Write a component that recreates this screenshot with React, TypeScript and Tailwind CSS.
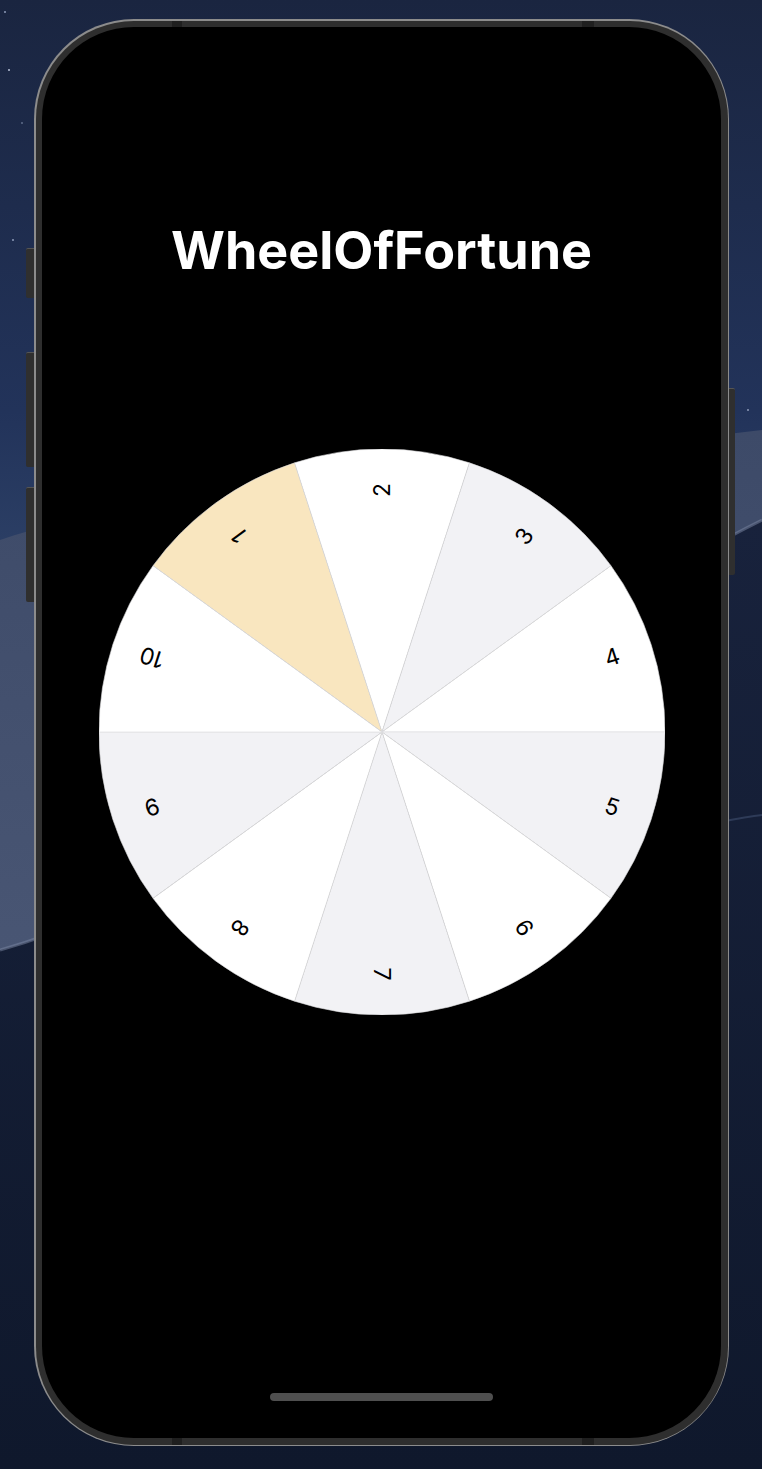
const segments = [1, 2, 3, 4, 5, 6, 7, 8, 9, 10];

const CX = 283;
const CY = 283;
const R = 283;
const LABEL_R = 242;

const rad = (deg: number) => (deg * Math.PI) / 180;

// point on the wheel, angle measured counter-clockwise from 3 o'clock
const pt = (deg: number, r: number) => [CX + r * Math.cos(rad(deg)), CY - r * Math.sin(rad(deg))];

const segmentFill = (n: number) => {
  if (n === 1) return "#f9e6bf";
  return n % 2 === 0 ? "#ffffff" : "#f2f2f5";
};

const Wheel = () => (
  <svg width={566} height={566} viewBox="0 0 566 566" className="block">
    {segments.map((n) => {
      const mid = 90 - (n - 2) * 36;
      const [x1, y1] = pt(mid + 18, R);
      const [x2, y2] = pt(mid - 18, R);
      return (
        <path
          key={n}
          d={`M${CX} ${CY} L${x1} ${y1} A${R} ${R} 0 0 1 ${x2} ${y2} Z`}
          fill={segmentFill(n)}
          stroke="#dcdcde"
          strokeWidth={0.6}
        />
      );
    })}
    {segments.map((n) => {
      const mid = 90 - (n - 2) * 36;
      const [x, y] = pt(mid, LABEL_R);
      return (
        <text
          key={n}
          x={0}
          y={0}
          transform={`translate(${x} ${y}) rotate(${-mid})`}
          textAnchor="middle"
          dominantBaseline="central"
          fontSize={23}
          fill="#000"
          style={{ fontFamily: "Inter, 'Liberation Sans', sans-serif" }}
        >
          {n}
        </text>
      );
    })}
  </svg>
);

const Wallpaper = () => (
  <svg className="absolute inset-0" width={762} height={1469} viewBox="0 0 762 1469">
    <defs>
      <linearGradient id="sky" x1="0" y1="0" x2="0" y2="1">
        <stop offset="0" stopColor="#1a2540" />
        <stop offset="0.28" stopColor="#22335a" />
        <stop offset="0.4" stopColor="#2e4268" />
        <stop offset="1" stopColor="#2a3b5e" />
      </linearGradient>
      <linearGradient id="dune" x1="0" y1="0" x2="0" y2="1">
        <stop offset="0" stopColor="#3d4a68" />
        <stop offset="0.7" stopColor="#4d5a78" />
        <stop offset="1" stopColor="#6b7896" />
      </linearGradient>
      <linearGradient id="front" x1="0" y1="0" x2="0" y2="1">
        <stop offset="0" stopColor="#18223c" />
        <stop offset="1" stopColor="#0f182c" />
      </linearGradient>
    </defs>
    <rect width={762} height={1469} fill="url(#sky)" />
    <path d="M0 540 C 180 480 420 470 762 430 L762 1469 L0 1469 Z" fill="url(#dune)" />
    <path d="M0 950 C 250 880 520 640 762 520 L762 1469 L0 1469 Z" fill="url(#front)" />
    <path d="M0 950 C 250 880 520 640 762 520" fill="none" stroke="#7b88a4" strokeWidth={3} opacity={0.5} />
    <path d="M720 822 C 740 818 752 816 762 815" fill="none" stroke="#2e3b58" strokeWidth={2} />
    <circle cx={5} cy={12} r={1} fill="#8e9bb8" />
    <circle cx={9} cy={70} r={1} fill="#b8c2d8" />
    <circle cx={13} cy={240} r={1} fill="#8e9bb8" />
    <circle cx={748} cy={410} r={1} fill="#8e9bb8" />
    <circle cx={22} cy={123} r={0.8} fill="#8e9bb8" />
  </svg>
);

export default function App() {
  return (
    <div className="relative w-[762px] h-[1469px] overflow-hidden bg-[#162038]">
      <Wallpaper />
      <div className="relative pt-[19px] pl-[34px]">
        <div className="relative w-[695px] h-[1427px]">
          {/* side buttons */}
          <div className="absolute left-[-8px] top-[229px] w-[8px] h-[50px] rounded-l-[2px] bg-[#2f2f2f] border-t border-[#555]" />
          <div className="absolute left-[-8px] top-[333px] w-[8px] h-[115px] rounded-l-[2px] bg-[#2f2f2f] border-t border-[#555]" />
          <div className="absolute left-[-8px] top-[468px] w-[8px] h-[115px] rounded-l-[2px] bg-[#2f2f2f] border-t border-[#555]" />
          <div className="absolute right-[-6px] top-[369px] w-[6px] h-[187px] rounded-r-[2px] bg-[#2f2f2f] border-t border-[#555]" />

          {/* frame */}
          <div className="w-full h-full rounded-[100px] bg-[#8c8c8c] p-[1.5px]">
            <div className="relative w-full h-full rounded-[98px] bg-[#2e2e2e] p-[6.5px]">
              <div className="absolute left-[136px] top-0 w-[10px] h-[8px] bg-[#1f1f1f]" />
              <div className="absolute left-[546px] top-0 w-[12px] h-[8px] bg-[#1f1f1f]" />
              <div className="absolute left-[136px] bottom-0 w-[10px] h-[8px] bg-[#1f1f1f]" />
              <div className="absolute left-[546px] bottom-0 w-[12px] h-[8px] bg-[#1f1f1f]" />

              {/* screen */}
              <div className="relative w-full h-full rounded-[92px] bg-black flex flex-col items-center overflow-hidden">
                <h1 className="mt-[198px] text-[52px] leading-[52px] font-bold text-white font-['Inter','Liberation_Sans',sans-serif]">
                  WheelOfFortune
                </h1>
                <div className="mt-[172px]">
                  <Wheel />
                </div>
                <div className="mt-auto mb-[37px] w-[223px] h-[8px] rounded-full bg-[#4f4f4f]" />
              </div>
            </div>
          </div>
        </div>
      </div>
    </div>
  );
}
